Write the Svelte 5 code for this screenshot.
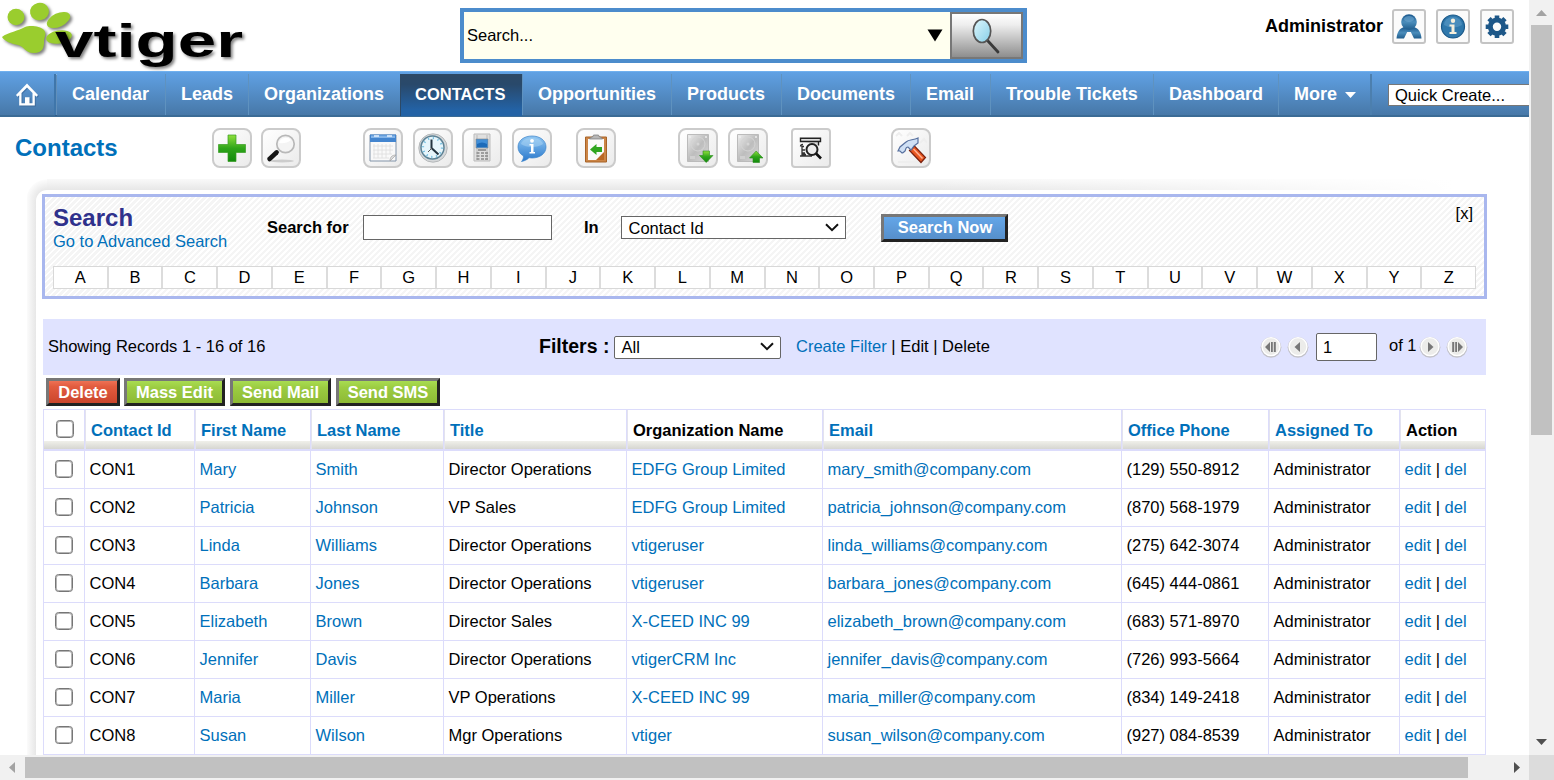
<script>
  const tabs = [
    { label: 'Calendar', w: 109 },
    { label: 'Leads', w: 83 },
    { label: 'Organizations', w: 152 },
    { label: 'CONTACTS', w: 122, active: true },
    { label: 'Opportunities', w: 149 },
    { label: 'Products', w: 110 },
    { label: 'Documents', w: 129 },
    { label: 'Email', w: 80 },
    { label: 'Trouble Tickets', w: 163 },
    { label: 'Dashboard', w: 125 },
    { label: 'More', w: 94, menu: true }
  ];
  const tools = [
    { icon: 'add', gap: 0 },
    { icon: 'find', gap: 9 },
    { icon: 'calendar', gap: 62 },
    { icon: 'clock', gap: 10 },
    { icon: 'phone', gap: 9 },
    { icon: 'chat', gap: 10 },
    { icon: 'clipboard', gap: 24 },
    { icon: 'import', gap: 62 },
    { icon: 'export', gap: 10 },
    { icon: 'duplicates', gap: 23 },
    { icon: 'settings', gap: 60 }
  ];
  const letters = 'ABCDEFGHIJKLMNOPQRSTUVWXYZ'.split('');
  const headers = ['Contact Id', 'First Name', 'Last Name', 'Title', 'Organization Name', 'Email', 'Office Phone', 'Assigned To', 'Action'];
  const plain = ['Organization Name', 'Action'];
  const rows = [
    ['CON1', 'Mary', 'Smith', 'Director Operations', 'EDFG Group Limited', 'mary_smith@company.com', '(129) 550-8912'],
    ['CON2', 'Patricia', 'Johnson', 'VP Sales', 'EDFG Group Limited', 'patricia_johnson@company.com', '(870) 568-1979'],
    ['CON3', 'Linda', 'Williams', 'Director Operations', 'vtigeruser', 'linda_williams@company.com', '(275) 642-3074'],
    ['CON4', 'Barbara', 'Jones', 'Director Operations', 'vtigeruser', 'barbara_jones@company.com', '(645) 444-0861'],
    ['CON5', 'Elizabeth', 'Brown', 'Director Sales', 'X-CEED INC 99', 'elizabeth_brown@company.com', '(683) 571-8970'],
    ['CON6', 'Jennifer', 'Davis', 'Director Operations', 'vtigerCRM Inc', 'jennifer_davis@company.com', '(726) 993-5664'],
    ['CON7', 'Maria', 'Miller', 'VP Operations', 'X-CEED INC 99', 'maria_miller@company.com', '(834) 149-2418'],
    ['CON8', 'Susan', 'Wilson', 'Mgr Operations', 'vtiger', 'susan_wilson@company.com', '(927) 084-8539']
  ];
  const linked = [1, 2, 4, 5];
</script>

{#snippet chevron()}
  <svg class="chev" width="14" height="9" viewBox="0 0 14 9"><path d="M1 1.2 7 7.2 13 1.2" fill="none" stroke="#111" stroke-width="2" /></svg>
{/snippet}

{#snippet pager(kind)}
  <svg class="pager" width="22" height="22" viewBox="0 0 22 22">
    <circle cx="11" cy="11.300" r="10.400" fill="#c2c2c8" />
    <circle cx="11" cy="10.600" r="9" fill="#ececea" stroke="#fff" stroke-width="1.400" />
    {#if kind === 'first'}
      <path d="M10 6v10L5 11zM11 6h1.800v10H11zM13.800 6h2v10h-2z" fill="#777" />
    {:else if kind === 'prev'}
      <path d="M13 6v10L7.500 11z" fill="#777" />
    {:else if kind === 'next'}
      <path d="M9 6v10l5.500-5z" fill="#777" />
    {:else}
      <path d="M12 6v10l5-5zM6.200 6h2v10h-2zM9.200 6H11v10H9.200z" fill="#777" />
    {/if}
  </svg>
{/snippet}

<div class="window">
  <div class="page">
    <header>
      <svg class="logo" width="250" height="71" viewBox="0 0 250 71">
        <g fill="#9acd2e" class="shadow">
          <ellipse cx="16" cy="17" rx="8.500" ry="8.300" />
          <ellipse cx="39.500" cy="11.500" rx="9.500" ry="8.800" transform="rotate(-12 39.500 11.500)" />
          <ellipse cx="58.500" cy="20" rx="12.500" ry="6.800" transform="rotate(-25 58.500 20)" />
          <ellipse cx="59" cy="37" rx="13" ry="6.500" transform="rotate(-10 59 37)" />
          <path d="M2 37C8 32 19 31 25 27c5-2 15-1 19 3 3 4 0 7 0 12s-1 11-10 11-10-7-16-8S4 41 2 37z" />
        </g>
        <text class="shadow" x="55" y="57" font-size="46" font-weight="700" textLength="188" lengthAdjust="spacingAndGlyphs">vtiger</text>
      </svg>
      <div class="global-search">
        <div class="query"><span>Search...</span><svg width="16" height="13" viewBox="0 0 16 13"><path d="M.5.5h15L8 12.500z" /></svg></div>
        <button class="lens" aria-label="Search">
          <svg width="32" height="38" viewBox="0 0 32 38">
            <defs><linearGradient id="glass" x1="0" y1="0" x2="1" y2="1"><stop offset="0" stop-color="#e0f7fc" /><stop offset="1" stop-color="#86cfe8" /></linearGradient></defs>
            <path d="m17.500 23.500 10.500 11.500" stroke="#3a3a3a" stroke-width="2.800" stroke-linecap="round" />
            <ellipse cx="12" cy="14" rx="8.700" ry="11.500" fill="url(#glass)" stroke="#555" stroke-width="1.700" />
          </svg>
        </button>
      </div>
      <div class="user">
        <b>Administrator</b>
        <span class="ubtn"><svg width="28" height="28" viewBox="0 0 28 28"><defs><linearGradient id="blu" x1="0" y1="0" x2="0" y2="1"><stop offset="0" stop-color="#19568b" /><stop offset=".5" stop-color="#4b8dbb" /><stop offset="1" stop-color="#1f5c8c" /></linearGradient></defs><path d="M1.500 25.500C2 19 4.500 15.500 9 14l10 0c4.500 1.500 7 5 7.500 11.500h-7.500l-3.200-6.500h-3.600l-3.200 6.500z" fill="url(#blu)" /><circle cx="14" cy="9" r="7.800" fill="url(#blu)" /><ellipse cx="14" cy="6" rx="5" ry="3" fill="#6aa5cf" opacity=".6" /></svg></span>
        <span class="ubtn"><svg width="28" height="28" viewBox="0 0 28 28"><circle cx="14" cy="13.500" r="11.500" fill="#2f78ac" stroke="#1c5a8a" stroke-width="1.200" /><path d="M5 12a9 8 0 0 1 18 0q-9 5-18 0" fill="#66a1cb" opacity=".5" /><circle cx="14" cy="7.800" r="2.200" fill="#f4eedc" /><path d="M10.500 11.500h5V19h2v2h-7v-2h2v-5.500h-2z" fill="#f4eedc" /></svg></span>
        <span class="ubtn"><svg width="28" height="28" viewBox="0 0 28 28"><circle cx="14" cy="13.700" r="6.700" fill="none" stroke="#1d5788" stroke-width="5" /><g stroke="#1d5788" stroke-width="4.600"><path d="M14 2.500v3M14 22v3M2.700 13.700h3M22.300 13.700h3M6 5.700l2 2M20 19.700l2 2M22 5.700l-2 2M8 19.700l-2 2" /></g></svg></span>
      </div>
    </header>

    <nav>
      <span class="home"><svg width="24" height="25" viewBox="0 0 24 25"><path d="M12 1.500 23 13l-1.500 1.700-1.700-1.500V23.500H4.200V13.200l-1.700 1.500L1 13zM12 5.500 6.500 11v10.200H10v-6h4.500v6h3V11z" fill="#fff" fill-rule="evenodd" /></svg></span>
      {#each tabs as tab}
        <span class="tab" class:active={tab.active} style:width="{tab.w}px">{tab.label}{#if tab.menu}<svg width="11" height="6" viewBox="0 0 11 6"><path d="M0 0h11L5.500 6z" fill="#fff" /></svg>{/if}</span>
      {/each}
      <span class="quick">Quick Create...</span>
    </nav>

    <div class="toolbar">
      <h1>Contacts</h1>
      {#each tools as tool}
        <span class="tool" class:square={tool.icon === 'duplicates'} style:margin-left="{tool.gap}px">
          <svg width="32" height="32" viewBox="0 0 32 32">
            <defs>
              <linearGradient id="grn" x1="0" y1="0" x2="0" y2="1"><stop offset="0" stop-color="#8fe03c" /><stop offset=".5" stop-color="#2fa51a" /><stop offset="1" stop-color="#118a0b" /></linearGradient>
              <linearGradient id="sky" x1="0" y1="0" x2="0" y2="1"><stop offset="0" stop-color="#90c7f3" /><stop offset="1" stop-color="#2978cc" /></linearGradient>
              <linearGradient id="disk" x1="0" y1="0" x2="1" y2="1"><stop offset="0" stop-color="#ededed" /><stop offset=".5" stop-color="#bdbdbd" /><stop offset="1" stop-color="#d9d9d9" /></linearGradient>
            </defs>
            {#if tool.icon === 'add'}
              <path d="M12 3h8v9.500h9.500v8H20V29.500h-8v-9H2.500v-8H12z" fill="url(#grn)" stroke="#379c22" stroke-width=".7" />
            {:else if tool.icon === 'find'}
              <ellipse cx="17" cy="29" rx="12" ry="1.500" fill="#ccc" />
              <path d="m13.500 19-2 2" stroke="#777" stroke-width="2.500" /><path d="m11.500 20.500-7 6.500" stroke="#161616" stroke-width="4.500" stroke-linecap="round" />
              <circle cx="20.500" cy="12" r="8.700" fill="#f4f4f4" stroke="#b8b8b8" stroke-width="1.700" /><path d="M14 11a7 7 0 0 1 12-3q-5 4-12 3" fill="#fff" />
            {:else if tool.icon === 'calendar'}
              <path d="M3 3h26v26H3z" fill="#f9f9f9" stroke="#8193a8" /><path d="M3 2.500h26V10H3z" fill="#4385cf" /><path d="M4 3.500h24v2.500H4z" fill="#83b4e8" /><path d="M7 4h5M20 4h5" stroke="#e7f2ff" stroke-width="1.500" />
              <path d="M7 12v14M11 12v14M15 12v14M19 12v14M23 12v10M6 14h20M6 18h20M6 22h19M6 26h16" stroke="#ddd" stroke-width=".8" /><path d="M29 23c-4 0-6 2-6 6z" fill="#ddd" stroke="#999" stroke-width=".6" />
            {:else if tool.icon === 'clock'}
              <circle cx="16" cy="16" r="14.200" fill="#d5d8da" stroke="#b5b8ba" /><circle cx="15.500" cy="15.500" r="11.500" fill="#e7f5fb" stroke="#5d8295" stroke-width="1.500" />
              <circle cx="15.500" cy="15.500" r="9.400" fill="none" stroke="#75bfe0" stroke-width="2" stroke-dasharray="1.300 3.620" /><path d="M14.500 7.500v8.500l7 6.500" fill="none" stroke="#243440" stroke-width="2" /><path d="m15 16-4 4" stroke="#555" />
            {:else if tool.icon === 'phone'}
              <path d="M8 2h16v27H8z" fill="#e0e0e0" stroke="#bbb" /><path d="M11 3v25M21 3v25" stroke="#aaa" stroke-width=".7" /><path d="M10 7h12v9H10z" fill="#418fd8" stroke="#888" stroke-width=".6" /><path d="M11 12q5-3 10 0v3H11z" fill="#1d6bb9" />
              <path d="M12 18h8" stroke="#999" stroke-width="2" /><path d="M10.500 21h3M15 21h3M19 21h3M10.500 24h3M15 24h3M19 24h3M10.500 27h3M15 27h3M19 27h3" stroke="#888" stroke-width="1.300" />
            {:else if tool.icon === 'chat'}
              <path d="M16 4c8 0 14 4.500 14 11S24 26 16 26l-3-.3C11 28 8 29 5.500 29.500 7 28 7.500 26 7.500 24 4 22 2 19 2 15 2 8.500 8 4 16 4z" fill="url(#sky)" stroke="#3b82c8" stroke-width=".7" /><path d="M5 12c2-8 20-8 22 0-5 4-17 4-22 0z" fill="#b6dbf7" opacity=".45" /><circle cx="16" cy="8.800" r="1.900" fill="#fff" /><path d="M13.500 12h4v8h1.500v1.500h-5.500V20H15v-6.500h-1.500z" fill="#fff" />
            {:else if tool.icon === 'clipboard'}
              <path d="M5.500 5h21v25h-21z" fill="#cc8546" stroke="#a76227" /><path d="M8 7h16v21H8z" fill="#fafafa" /><path d="M16 28h8v-8z" fill="#ba6824" /><path d="M9.500 7c1-3 4-1 4-4h5c0 3 3 1 4 4z" fill="#b6b6b6" stroke="#777" stroke-width=".7" /><path d="m10 17.500 6.500-5.500v3H22v5h-5.500v3z" fill="#2fa51f" />
            {:else if tool.icon === 'import' || tool.icon === 'export'}
              <path d="M5.500 2.500h21v27h-21z" fill="url(#disk)" stroke="#bbb" /><circle cx="16" cy="12" r="7" fill="none" stroke="#d4d4d4" stroke-width="1" /><circle cx="16" cy="12" r="1.500" fill="#d6d6d6" /><circle cx="8" cy="5" r="1" fill="#eee" /><circle cx="24" cy="5" r="1" fill="#eee" /><path d="M8 24h5v3H8z" fill="#d0d0d0" />
              {#if tool.icon === 'import'}
                <path d="M21 19h6.500v4.500H31l-6.800 7-6.700-7H21z" fill="url(#grn)" stroke="#288b1c" stroke-width=".6" />
              {:else}
                <path d="M21 30.500h6.500V26H31l-6.800-7-6.700 7H21z" fill="url(#grn)" stroke="#288b1c" stroke-width=".6" />
              {/if}
            {:else if tool.icon === 'duplicates'}
              <path d="M5.500 6.200h20v3.300h-20zM8 9.500h15.500v4" fill="#ddd" stroke="#222" stroke-width="1.400" /><path d="M8 12.500q-2.500 0-2.500 2M9 14.500H7v8h4M7 18h3M7 21h3M5 24h12" fill="none" stroke="#333" stroke-width="1.300" /><circle cx="17" cy="17.500" r="5.500" fill="#eee" stroke="#222" stroke-width="2" /><path d="m21 21.500 5 5" stroke="#111" stroke-width="2.600" />
            {:else}
              <path d="M3 30h20M1 4l3-3 3 3M12 4l3-3 3 3M25 11l4-4 3 4" stroke="#eee" fill="none" stroke-width="2" />
              <path d="m14.500 18.500 5-4.500 11 11.500-4.500 5z" fill="#e8561f" stroke="#79200e" stroke-width="1.200" /><path d="m18.500 17 9 9.500" stroke="#ffb193" stroke-width="1.500" />
              <path d="m3 19 2-4 6-5c3-3 7-1.500 12-4v5l-4 3-3 4-3-3c-3 0-2 3-3 4s-3 3-4 1-2-1-3-1z" fill="#cfe0f5" stroke="#58719f" stroke-width="1.200" />
            {/if}
          </svg>
        </span>
      {/each}
    </div>

    <div class="frame">
      <main>
        <section class="search">
          <div class="search-top">
            <div class="caption"><h2>Search</h2><a>Go to Advanced Search</a></div>
            <b class="for">Search for</b>
            <input class="term" aria-label="Search for" />
            <b class="in">In</b>
            <span class="select field"><span>Contact Id</span>{@render chevron()}</span>
            <button class="btn blue">Search Now</button>
            <span class="close">[x]</span>
          </div>
          <div class="letters">{#each letters as letter}<span>{letter}</span>{/each}</div>
        </section>

        <section class="filters">
          <span class="count">Showing Records 1 - 16 of 16</span>
          <b>Filters :</b>
          <span class="select view"><span>All</span>{@render chevron()}</span>
          <span class="links"><a>Create Filter</a> | Edit | Delete</span>
          <div class="paging">
            {@render pager('first')}{@render pager('prev')}
            <span class="pageno">1</span>
            <span class="of">of 1</span>
            {@render pager('next')}{@render pager('last')}
          </div>
        </section>

        <div class="actions">
          <button class="btn red">Delete</button>
          <button class="btn green">Mass Edit</button>
          <button class="btn green">Send Mail</button>
          <button class="btn green">Send SMS</button>
        </div>

        <div class="table">
          <div class="tr th">
            <span class="cell check"><input type="checkbox" aria-label="Select all" /></span>
            {#each headers as h}<span class="cell" class:dark={plain.includes(h)}>{h}</span>{/each}
          </div>
          {#each rows as row}
            <div class="tr">
              <span class="cell check"><input type="checkbox" aria-label={row[0]} /></span>
              {#each row as value, i}<span class="cell">{#if linked.includes(i)}<a>{value}</a>{:else}{value}{/if}</span>{/each}
              <span class="cell">Administrator</span>
              <span class="cell"><a>edit</a>&nbsp;|&nbsp;<a>del</a></span>
            </div>
          {/each}
        </div>
      </main>
    </div>
  </div>

  <div class="vbar">
    <svg width="25" height="25" viewBox="0 0 25 25"><path d="M7 16h11l-5.500-6z" fill="#a3a3a3" /></svg>
    <i></i>
    <svg width="25" height="25" viewBox="0 0 25 25"><path d="M7 9h11l-5.500 6z" fill="#505050" /></svg>
  </div>
  <div class="hbar">
    <svg width="25" height="25" viewBox="0 0 25 25"><path d="M15 7v11l-6-5.500z" fill="#a3a3a3" /></svg>
    <i></i>
    <svg width="25" height="25" viewBox="0 0 25 25"><path d="M10 7v11l6-5.500z" fill="#505050" /></svg>
  </div>
  <div class="corner"></div>
</div>

<style>
  :global(body) { margin: 0; overflow: hidden; background: #fff; }
  .window, .window * { box-sizing: border-box; }
  .window {
    width: 1554px; height: 780px; overflow: hidden;
    display: grid; grid-template: 755px 25px / 1529px 25px;
    font: 16.5px/19px "Liberation Sans", Arial, sans-serif; color: #000;
  }
  svg { display: block; flex: none; }
  a { color: #0070ba; }
  h1, h2 { margin: 0; }
  button, input { font: inherit; margin: 0; border-radius: 0; }
  .page { overflow: hidden; display: flex; flex-direction: column; }

  header { height: 71px; flex: none; display: flex; align-items: flex-start; }
  .logo { overflow: visible; }
  .shadow { filter: drop-shadow(2px 2px 1.500px rgba(0, 0, 0, .5)); }
  .global-search { margin: 8px 0 0 210px; width: 567px; height: 55px; border: 4px solid #4c8ccc; display: flex; }
  .query { flex: 1; background: #ffffef; display: flex; align-items: center; justify-content: space-between; padding: 0 7px 0 3px; }
  .lens { width: 73px; padding: 0 2px 0 0; border: 2px solid #777; background: linear-gradient(#fff, #eee 25%, #8e8e8e); display: flex; justify-content: center; align-items: center; }
  .user { margin: 9px 15px 0 auto; display: flex; align-items: center; }
  .user b { font-size: 18px; margin-right: 9px; }
  .ubtn { width: 34px; height: 35px; border: 2px solid #c4c4c4; border-radius: 3px; background: #fbfbfb; display: flex; align-items: center; justify-content: center; margin-left: 10px; }
  b + .ubtn { margin-left: 0; }

  nav { height: 46px; flex: none; display: flex; align-items: stretch; white-space: nowrap; border-top: 1px solid #70b0ee; border-bottom: 2px solid #3b6b95; background: linear-gradient(#60a1e4, #4778a8); font-size: 18px; font-weight: 700; color: #fff; }
  .home { width: 56px; margin: 2px 0 0; padding: 8px 0 0 15px; border-right: 2px solid #3f76aa; filter: drop-shadow(1px 1px 0 rgba(30, 60, 100, .3)); }
  .tab { flex: none; margin-top: 2px; border-left: 1px solid #7fb4e0; line-height: 40px; padding-left: 15px; }
  .tab:nth-child(n + 3) { border-left-color: #5f92bf; }
  .tab svg { display: inline-block; margin: 0 0 2px 8px; }
  .tab.active { background: linear-gradient(#2c4966, #29496b 25%, #2362a5 85%); border-left-color: #2c4966; font-size: 16.5px; margin-bottom: -1px; padding-left: 14px; }
  .quick { margin: 12px 0 0 16px; flex: 1; height: 22px; background: #fff; border: 1px solid #777; border-right: 0; color: #000; font: 16.5px/21px "Liberation Sans", Arial, sans-serif; padding-left: 6px; }
  .tab:nth-last-child(2) { border-right: 2px solid #4c7fae; }

  .toolbar { height: 62px; flex: none; display: flex; padding: 11px 0 0 15px; }
  h1 { width: 197px; font-size: 24px; line-height: 40px; color: #0070ba; }
  .tool { width: 40px; height: 40px; flex: none; border: 2px solid #cbcbcb; border-radius: 8px; background: linear-gradient(135deg, #fff, #ebebeb); display: flex; align-items: center; justify-content: center; }
  .tool.square { border-radius: 4px; }

  .frame {
    flex: 1; min-height: 0; margin-left: 27px; padding: 11px 0 0 9px;
    background:
      radial-gradient(circle at 100% 100%, #e7e7e7 10px, #fbfbfb 20px, #fff 21px) 0 0 / 20px 21px no-repeat,
      linear-gradient(90deg, transparent 60%, #fff 95%) 0 0 / 100% 11px no-repeat,
      linear-gradient(#f9f9f9, #e7e7e7) 0 0 / 100% 11px no-repeat,
      linear-gradient(90deg, #fbfbfb, #e7e7e7) 0 0 / 9px 100% no-repeat;
  }
  main { background: #fff; border-radius: 11px 0 0 0; padding: 4px 42px 0 6px; height: 100%; min-width: 0; overflow: hidden; }
  .search { height: 105px; width: 1445px; border: 3px solid #a9b7ee; background: repeating-linear-gradient(-45deg, #fff 0 2px, #f5f5f5 2px 4.240px); padding: 8px 8px 0; }
  .search-top { display: flex; height: 61px; align-items: flex-start; }
  .caption { width: 214px; }
  h2 { font-size: 24px; line-height: 25px; color: #2f318c; }
  .caption a { line-height: 20px; display: block; margin-top: 1px; }
  .for { width: 96px; margin-top: 13px; }
  .term { width: 189px; height: 25px; margin-top: 10px; border: 1px solid #666; background: #fff; padding: 0; }
  .in { width: 37px; margin: 13px 0 0 32px; }
  .select { display: flex; justify-content: space-between; align-items: center; background: #fff; border: 1px solid #666; padding: 1px 6px 0 6.500px; height: 23px; }
  .field { width: 225px; margin-top: 11px; }
  .view { width: 167px; border-radius: 2px; margin-left: 5px; }
  .select svg { margin-top: -2px; }
  .btn { border: 3px solid; border-color: #777 #222 #222 #777; color: #fff; font-weight: 700; height: 28px; line-height: 20px; padding: 0; white-space: nowrap; }
  .blue { width: 127px; margin: 9px 0 0 35px; padding: 0 0 2px 1px; background: linear-gradient(#64a6e8, #568fcb); }
  .close { margin: -1px 3px 0 auto; }
  .letters { display: flex; width: 1423px; height: 23px; border: 1px solid #d8d8d8; background: #fff; line-height: 21px; }
  .letters span { flex: 1; text-align: center; }
  .letters span + span { border-left: 2px solid #dcdcdc; }

  .filters { margin: 20px 0 0 1px; width: 1443px; height: 56px; background: #e0e3ff; display: flex; align-items: center; padding: 0 0 0 5px; }
  .count { width: 491px; margin-top: -2px; }
  .filters b { font-size: 19.5px; width: 70px; white-space: nowrap; margin-top: -2px; }
  .links { margin: -2px 0 0 15px; }
  .paging { margin-left: auto; margin-right: 18px; display: flex; align-items: center; }
  .pager { margin-right: 5px; }
  .pager:last-child { margin-right: 0; }
  .pageno { width: 61px; height: 28px; border: 1px solid #666; border-radius: 2px; background: #fff; line-height: 26px; padding-left: 6px; margin: 0 12px 0 2px; }
  .of { width: 29px; margin: -3px 1px 0 0; white-space: nowrap; }

  .actions { height: 34px; display: flex; gap: 4px; padding: 3px 0 0 4px; }
  .actions .btn { flex: none; width: 101px; margin-right: 1px; }
  .actions .red { width: 74px; margin-right: 0; background: linear-gradient(#ee7155, #e25c3f 25%, #cb452c); }
  .actions .green { background: linear-gradient(#a8dc51, #9ccc42 30%, #8dba35); }
  .actions .btn:last-child { width: 104px; }

  .table { margin-left: 1px; width: 1443px; border-left: 1px solid #dcdcfb; }
  .tr { display: grid; grid-template-columns: 41px 110px 116px 133px 183px 196px 299px 147px 131px 86px; height: 38px; }
  .cell { border-right: 1px solid #dcdcfb; border-bottom: 1px solid #dcdcfb; padding: 0 0 0 4.500px; line-height: 37px; white-space: nowrap; overflow: hidden; }
  .th { height: 42px; border-top: 1px solid #dcdcfb; background: linear-gradient(#fff 31px, #f0f0ea 31px, #d6d6d1 39px); font-weight: 700; }
  .th .cell { line-height: 41px; color: #0070ba; border-bottom: 2px solid #dcdcfb; padding-left: 6px; }
  .th .cell + .cell { box-shadow: inset 1px 0 #e3e3ee; }
  .th .cell.dark { color: #000; }
  .cell.check, .th .cell.check { display: flex; align-items: center; padding: 0 0 1px 11px; }
  .th .cell.check { padding-left: 12px; }
  .check input { appearance: none; width: 18px; height: 18px; border: 1px solid #767676; box-shadow: inset 0 0 0 1px #b4b4b4; border-radius: 3.500px; background: #fff; }

  .vbar, .hbar { background: #f1f1f1; display: flex; }
  .vbar { flex-direction: column; }
  .vbar i { width: 21px; height: 410px; background: #c1c1c1; margin: 0 auto; }
  .hbar i { height: 21px; width: 1443px; background: #c1c1c1; margin: auto 0; }
  .vbar svg:last-child { margin-top: auto; }
  .hbar svg:last-child { margin-left: auto; }
  .corner { background: #dcdcdc; }
  .vbar { grid-area: 1 / 2; }
  .hbar { grid-area: 2 / 1; }
  .page { grid-area: 1 / 1; }
  .corner { grid-area: 2 / 2; }
</style>
